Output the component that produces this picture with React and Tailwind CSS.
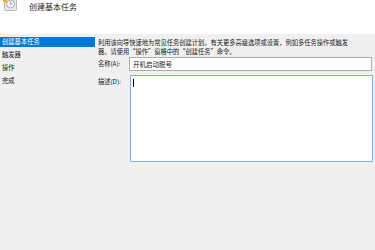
export default function App() {
  const steps = ['创建基本任务', '触发器', '操作', '完成']

  return (
    <div
      className="w-[375px] h-[250px] bg-[#f0f0f0] overflow-hidden text-[#1a1a1a]"
      style={{fontFamily: '"Noto Sans CJK SC", "Noto Sans", sans-serif'}}
    >
      {/* 标题栏 */}
      <div className="h-[34px] bg-white flex items-start">
        <div className="relative ml-[3px] -mt-[3px] w-[14px] h-[14px]">
          <svg width="14" height="14" viewBox="0 0 14 14">
            <rect x="1.5" y="0.5" width="12" height="13" rx="1" fill="#e9e9e9" stroke="#b5b5b5" />
            <circle cx="7.5" cy="7" r="4" fill="#f6f6f6" stroke="#9a9a9a" strokeWidth="0.8" />
            <path d="M7.5 4.5 V7 H9.2" fill="none" stroke="#777" strokeWidth="0.7" />
            <circle cx="2" cy="3.5" r="2" fill="#f5a623" />
          </svg>
        </div>
        <div className="ml-[12px] mt-[2px] text-[8px] leading-[10px] text-[#222]">创建基本任务</div>
      </div>

      <div className="flex pt-[3px]">
        {/* 左侧步骤 */}
        <div className="w-[95px] flex flex-col gap-[3px]">
          {steps.map((s, i) => (
            <div
              key={s}
              className={`h-[10px] pl-[2px] text-[6.3px] leading-[10px] ${i === 0 ? 'bg-[#0078d7] text-white' : 'text-[#1a1a1a]'}`}
            >
              {s}
            </div>
          ))}
        </div>

        {/* 右侧内容 */}
        <div className="ml-[3px] w-[275px] flex flex-col text-[6.25px]">
          <div className="leading-[9px] whitespace-nowrap pt-[1px]">
            <div>利用该向导快速地为常见任务创建计划。有关更多高级选项或设置，例如多任务操作或触发</div>
            <div>器。请使用“操作”窗格中的“创建任务”命令。</div>
          </div>

          <div className="flex items-center mt-[1px]">
            <div className="w-[31px] leading-[14px]">名称(A):</div>
            <div className="w-[243px] h-[14px] bg-white border border-[#adadad] pl-[3px] leading-[12px] text-[6.5px]">
              开机启动脱号
            </div>
          </div>

          <div className="flex items-start mt-[4px]">
            <div className="w-[32px] leading-[14px]">描述(D):</div>
            <div className="w-[243px] h-[87px] bg-white border border-[#7eb4ea] pl-[2px] pt-[3px]">
              <div className="w-px h-[8px] bg-black" />
            </div>
          </div>
        </div>
      </div>
    </div>
  )
}
